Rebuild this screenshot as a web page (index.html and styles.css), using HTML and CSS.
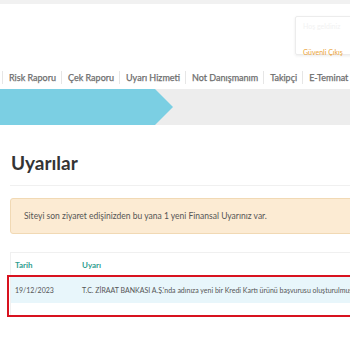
FILE: index.html
```html
<!DOCTYPE html>
<html lang="tr">
<head>
  <meta charset="UTF-8" />
  <meta name="viewport" content="width=device-width, initial-scale=1.0"/>
  <title>Uyarılar</title>
  <link rel="stylesheet" href="styles.css">
</head>
<body>
<div class="page">
  <div class="top-strip"></div>

  <div class="header">
    <div class="user-box">
      <div class="user-name">Hoş geldiniz</div>
      <a class="logout" href="#">Güvenli Çıkış</a>
    </div>
  </div>

  <ul class="nav">
    <li>Risk Raporu</li>
    <li>Çek Raporu</li>
    <li>Uyarı Hizmeti</li>
    <li>Not Danışmanım</li>
    <li>Takipçi</li>
    <li>E-Teminat Mektubu</li>
  </ul>

  <div class="band">
    <div class="band-arrow"></div>
  </div>

  <div class="content">
    <h1>Uyarılar</h1>

    <div class="alert">Siteyi son ziyaret edişinizden bu yana 1 yeni Finansal Uyarınız var.</div>

    <div class="table-wrap">
      <table class="alerts">
        <thead>
          <tr>
            <th class="col-date">Tarih</th>
            <th>Uyarı</th>
          </tr>
        </thead>
        <tbody>
          <tr class="new">
            <td class="col-date">19/12/2023</td>
            <td>T.C. ZİRAAT BANKASI A.Ş.'nda adınıza yeni bir Kredi Kartı ürünü başvurusu oluşturulmuştur.</td>
          </tr>
        </tbody>
      </table>
      <div class="mark"></div>
    </div>
  </div>
</div>
</body>
</html>
```

FILE: styles.css
```css
body {
  font-family: Lato, "Open Sans", sans-serif;
  background: #fff;
  margin: 0;
  overflow: hidden;
}
.page {
  width: 420px;
}
.top-strip {
  height: 4px;
  background: #f1f1f1;
}
.header {
  height: 62px;
  padding-top: 12px;
  padding-left: 295px;
  box-sizing: border-box;
}
.user-box {
  width: 100px;
  height: 39px;
  border: 1px solid #ececec;
  border-radius: 2px;
  box-shadow: 0 1px 3px rgba(0,0,0,0.08);
  padding: 5px 7px;
  box-sizing: border-box;
}
.user-name {
  font-size: 7px;
  color: #f2f2f2;
  height: 17px;
}
.logout {
  font-size: 7px;
  color: #eba43a;
  text-decoration: none;
}
.nav {
  list-style: none;
  margin: 0;
  padding: 0 0 0 2px;
  display: flex;
  height: 23px;
  align-items: center;
}
.nav li {
  font-size: 9px;
  color: #6e6e6e;
  padding: 0 5px 0 6px;
  border-left: 1px solid #e6e6e6;
  line-height: 13px;
  -webkit-text-stroke: 0.25px #6e6e6e;
}
.band {
  height: 36px;
  background: #ededed;
}
.band-arrow {
  width: 173px;
  height: 36px;
  background: #7bcfe3;
  clip-path: polygon(0 0, 155px 0, 173px 50%, 155px 100%, 0 100%);
}
.content {
  padding: 0 0 0 10px;
}
h1 {
  font-size: 19px;
  font-weight: bold;
  color: #333;
  margin: 0;
  padding: 26px 0 11px 1px;
  border-bottom: 1px solid #f0f0f0;
}
.alert {
  margin-top: 12px;
  background: #fcebd3;
  border: 1px solid #f1d9b4;
  border-radius: 3px;
  height: 36px;
  box-sizing: border-box;
  padding: 0 13px;
  display: flex;
  align-items: center;
  font-size: 8.5px;
  color: #555;
}
.table-wrap {
  position: relative;
  margin-top: 18px;
  border-top: 1px solid #f0f0f0;
  border-left: 1px solid #f0f0f0;
  padding-bottom: 14px;
}
.alerts {
  border-collapse: collapse;
  width: 100%;
  white-space: nowrap;
}
.alerts th {
  text-align: left;
  font-size: 8px;
  font-weight: bold;
  color: #2f9e8f;
  height: 24px;
  padding: 0 4px;
}
.alerts td {
  font-size: 7px;
  color: #555;
  height: 26px;
  padding: 0 4px;
}
.alerts .col-date {
  width: 59px;
}
.alerts tr.new td {
  background: #e8f6fb;
}
.mark {
  position: absolute;
  left: -4px;
  top: 22px;
  right: 0;
  bottom: 0;
  border: 2px solid #d8121f;
}
```
